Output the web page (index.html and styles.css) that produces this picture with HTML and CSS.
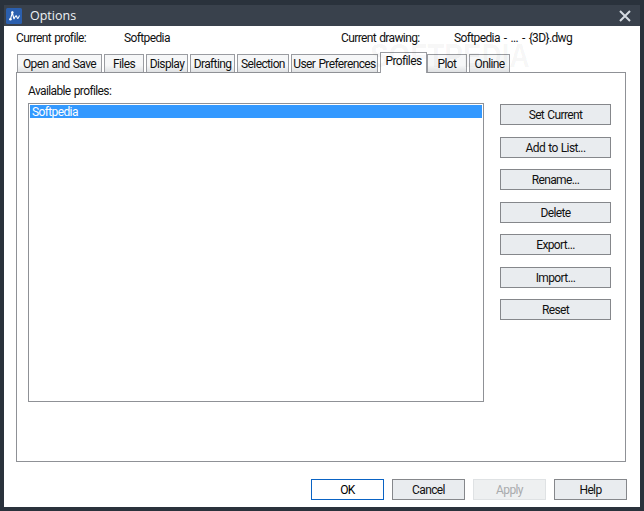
FILE: index.html
```html
<!DOCTYPE html>
<html lang="en">
<head>
<meta charset="utf-8">
<title>Options</title>
<link rel="stylesheet" href="styles.css">
</head>
<body>
<div class="window">
  <header class="titlebar">
    <svg class="app-icon" width="16" height="16" viewBox="0 0 16 16">
      <rect width="16" height="16" rx="1.5" fill="#2b5fae"/>
      <path d="M4.5 11 L6.3 4.8 L8 11 M8 11 C9 9 9.5 7.5 10.5 8 C11 9 11 10.5 11.8 10.5 C12.6 10 13 8.5 13.5 7.5" fill="none" stroke="#fff" stroke-width="1.1"/>
      <circle cx="6.3" cy="4.6" r="1.3" fill="#fff"/>
      <circle cx="4.4" cy="11.2" r="1.3" fill="#fff"/>
    </svg>
    <span class="title">Options</span>
    <svg class="close" width="12" height="12" viewBox="0 0 12 12">
      <path d="M1 1 L11 11 M11 1 L1 11" stroke="#d5dbe1" stroke-width="2" fill="none"/>
    </svg>
  </header>
  <main class="client">
    <div class="info">
      <span class="info-label">Current profile:</span>
      <span class="info-value">Softpedia</span>
      <span class="info-label drawing">Current drawing:</span>
      <span class="info-value">Softpedia - ... - {3D}.dwg</span>
    </div>
    <div class="tabs">
      <div class="tab">Open and Save</div>
      <div class="tab">Files</div>
      <div class="tab">Display</div>
      <div class="tab">Drafting</div>
      <div class="tab">Selection</div>
      <div class="tab">User Preferences</div>
      <div class="tab active">Profiles</div>
      <div class="tab">Plot</div>
      <div class="tab">Online</div>
    </div>
    <div class="watermark">SOFTPEDIA</div>
    <section class="panel">
      <div class="list-col">
        <div class="list-label">Available profiles:</div>
        <div class="list">
          <div class="list-item">Softpedia</div>
        </div>
      </div>
      <div class="side">
        <button class="btn">Set Current</button>
        <button class="btn">Add to List...</button>
        <button class="btn">Rename...</button>
        <button class="btn">Delete</button>
        <button class="btn">Export...</button>
        <button class="btn">Import...</button>
        <button class="btn">Reset</button>
      </div>
    </section>
    <footer class="footer">
      <button class="btn wide default">OK</button>
      <button class="btn wide">Cancel</button>
      <button class="btn wide disabled">Apply</button>
      <button class="btn wide">Help</button>
    </footer>
  </main>
</div>
</body>
</html>
```
FILE: styles.css
```css
* { box-sizing: border-box; }
html, body { margin: 0; padding: 0; height: 100%; }
body {
  background: #2a323c;
  font-family: Roboto, "Open Sans", sans-serif;
  font-size: 12px;
  letter-spacing: -0.62px;
  word-spacing: 0.8px;
  color: #111;
}
.window {
  height: 511px;
  display: flex;
  flex-direction: column;
  padding: 5px 4px 4px;
}
.titlebar {
  height: 21px;
  flex: none;
  display: flex;
  align-items: center;
  gap: 8px;
  padding: 0 9px 0 2px;
  background: #39414c;
  color: #eef1f4;
}
.app-icon { flex: none; margin-top: 1px; }
.title { font-family: "Open Sans", sans-serif; font-size: 12.5px; letter-spacing: 0; }
.close { margin-left: auto; margin-top: 1px; }
.client {
  flex: 1;
  position: relative;
  background: #fff;
  padding: 4px 15px 0 12px;
  display: flex;
  flex-direction: column;
}
.info { display: flex; height: 16px; line-height: 16px; }
.info-label { width: 108px; }
.info-label.drawing { width: 113px; margin-left: 109px; }
.info-value { width: 108px; white-space: nowrap; word-spacing: 1.6px; }
.tabs {
  display: grid;
  grid-template-columns: 87px 42px 44px 47px 54px 89px 47px 42px 43px;
  height: 20px;
  margin: 6px 0 0 1px;
  align-items: end;
  position: relative;
  z-index: 1;
}
.tab {
  height: 18px;
  line-height: 18px;
  text-align: center;
  white-space: nowrap;
  margin-right: 2px;
  background: linear-gradient(#f6f7f8 0 60%, #dfe1e3);
  border: 1px solid #9a9ca1;
  border-bottom: 0;
}
.tab.active {
  height: 21px;
  margin-right: 0;
  margin-bottom: -1px;
  background: #fff;
  line-height: 17px;
}
.watermark {
  position: absolute;
  z-index: 2;
  left: 366px;
  top: 10px;
  font-family: "Liberation Sans", sans-serif;
  font-size: 34px;
  font-weight: 700;
  letter-spacing: 0;
  transform: scaleX(0.82);
  transform-origin: left top;
  color: rgba(0, 0, 0, 0.045);
  pointer-events: none;
}
.panel {
  width: 610px;
  height: 390px;
  flex: none;
  border: 1px solid #8f9196;
  display: flex;
  padding: 10px 13px 0 11px;
  background: #fff;
  position: relative;
}
.list-col { width: 456px; }
.list-label { height: 20px; line-height: 17px; }
.list {
  height: 299px;
  border: 1px solid #8f9196;
  padding: 1px;
}
.list-item {
  height: 13px;
  width: 452px;
  line-height: 15px;
  padding-left: 2px;
  background: #3399ff;
  color: #fff;
}
.side {
  width: 111px;
  margin-left: 16px;
  padding-top: 21px;
  display: flex;
  flex-direction: column;
  row-gap: 11px;
}
.side .btn:nth-child(even) { margin-top: 1px; }
.btn {
  display: block;
  height: 21px;
  width: 111px;
  padding: 0;
  flex: none;
  font: inherit;
  letter-spacing: inherit;
  word-spacing: inherit;
  color: #111;
  background: #e9ecef;
  border: 1px solid #85878b;
}
.footer {
  display: flex;
  justify-content: flex-end;
  gap: 8px;
  padding: 17px 0 0;
  margin-right: -2px;
}
.btn.wide { width: 73px; }
.btn.default { background: #fff; border-color: #0a63c4; color: #000; }
.btn.disabled { background: #eef0f1; border-color: #dfe2e4; color: #a9abad; }
```
